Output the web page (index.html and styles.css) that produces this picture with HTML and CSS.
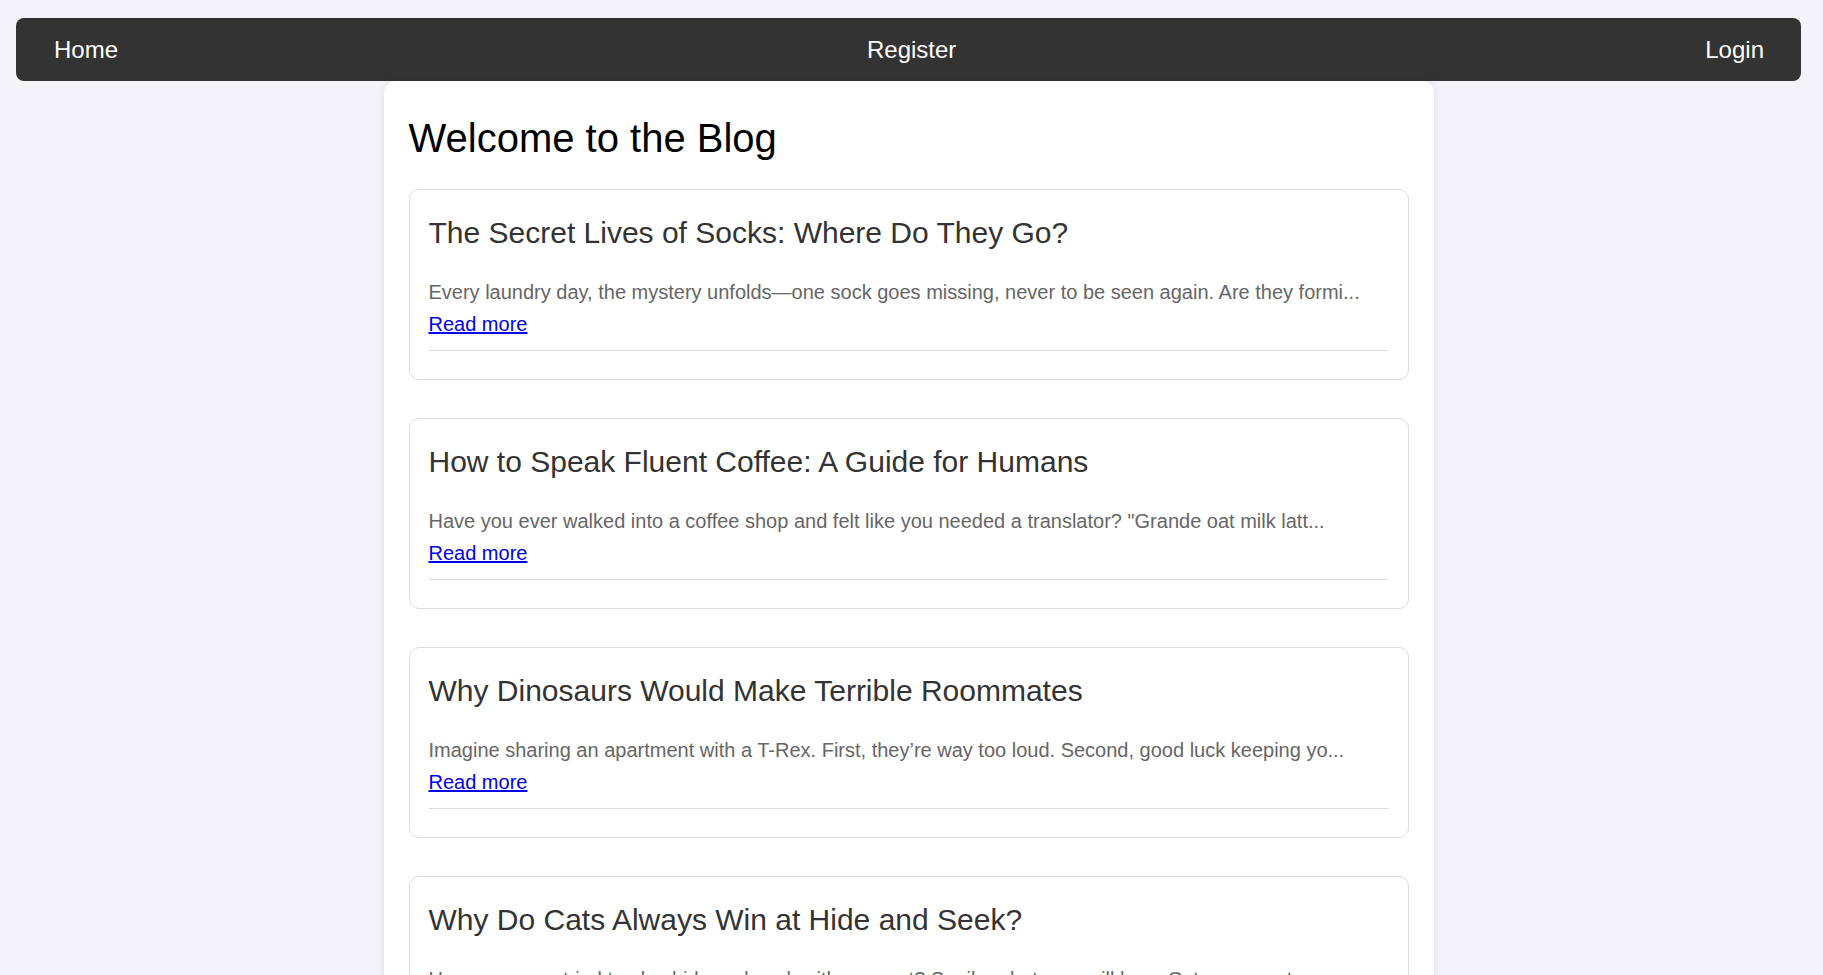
FILE: index.html
```html
<!DOCTYPE html>
<html lang="en">
<head>
<meta charset="utf-8">
<title>Blog</title>
<link rel="stylesheet" href="styles.css">
</head>
<body>
<div class="page">
  <nav class="navbar">
    <a class="nav-link" href="#">Home</a>
    <a class="nav-link" href="#">Register</a>
    <a class="nav-link" href="#">Login</a>
  </nav>
  <main class="container">
    <h1 class="page-title">Welcome to the Blog</h1>
    <article class="post">
      <h2 class="post-title">The Secret Lives of Socks: Where Do They Go?</h2>
      <p class="post-excerpt">Every laundry day, the mystery unfolds—one sock goes missing, never to be seen again. Are they formi...</p>
      <a class="read-more" href="#">Read more</a>
      <div class="post-rule"></div>
    </article>
    <article class="post">
      <h2 class="post-title">How to Speak Fluent Coffee: A Guide for Humans</h2>
      <p class="post-excerpt">Have you ever walked into a coffee shop and felt like you needed a translator? "Grande oat milk latt...</p>
      <a class="read-more" href="#">Read more</a>
      <div class="post-rule"></div>
    </article>
    <article class="post">
      <h2 class="post-title">Why Dinosaurs Would Make Terrible Roommates</h2>
      <p class="post-excerpt">Imagine sharing an apartment with a T-Rex. First, they’re way too loud. Second, good luck keeping yo...</p>
      <a class="read-more" href="#">Read more</a>
      <div class="post-rule"></div>
    </article>
    <article class="post">
      <h2 class="post-title">Why Do Cats Always Win at Hide and Seek?</h2>
      <p class="post-excerpt">Have you ever tried to play hide and seek with your cat? Spoiler alert: you will lose. Cats are mast...</p>
      <a class="read-more" href="#">Read more</a>
      <div class="post-rule"></div>
    </article>
  </main>
</div>
</body>
</html>
```

FILE: styles.css
```css
html {
  overflow: hidden;
}

body {
  margin: 0;
  background: #f4f4f8;
  font-family: "Liberation Sans", Arial, sans-serif;
}

.page {
  width: 1817px;
  padding-top: 18px;
}

.navbar {
  margin: 0 16px;
  height: 63px;
  box-sizing: border-box;
  padding: 0 37px 0 38px;
  background: #333333;
  border-radius: 8px;
  display: flex;
  align-items: center;
  justify-content: space-between;
}

.nav-link {
  color: #ffffff;
  text-decoration: none;
  font-size: 24px;
  line-height: 28px;
  padding-top: 1px;
}

.container {
  width: 1050px;
  box-sizing: border-box;
  margin: 0 auto;
  padding: 34px 25px 25px;
  background: #ffffff;
  border-radius: 12px;
  box-shadow: 0 0 10px rgba(0, 0, 0, 0.08);
}

.page-title {
  margin: 0 0 28px;
  font-size: 40px;
  line-height: 46px;
  font-weight: normal;
  color: #000000;
}

.post {
  border: 1px solid #dddddd;
  border-radius: 10px;
  padding: 19px 19px 19px;
  margin-bottom: 38px;
  display: flex;
  flex-direction: column;
  align-items: flex-start;
}

.post-title {
  margin: 6px 0 31px;
  font-size: 30px;
  line-height: 35px;
  font-weight: normal;
  color: #333333;
}

.post-excerpt {
  margin: 0 0 9px;
  font-size: 20px;
  line-height: 23px;
  color: #666666;
}

.read-more {
  font-size: 20px;
  line-height: 23px;
  color: #0000ee;
  text-decoration: underline;
}

.post-rule {
  align-self: stretch;
  margin: 14px 0 9px;
  border-top: 1px solid #dddddd;
}
```
